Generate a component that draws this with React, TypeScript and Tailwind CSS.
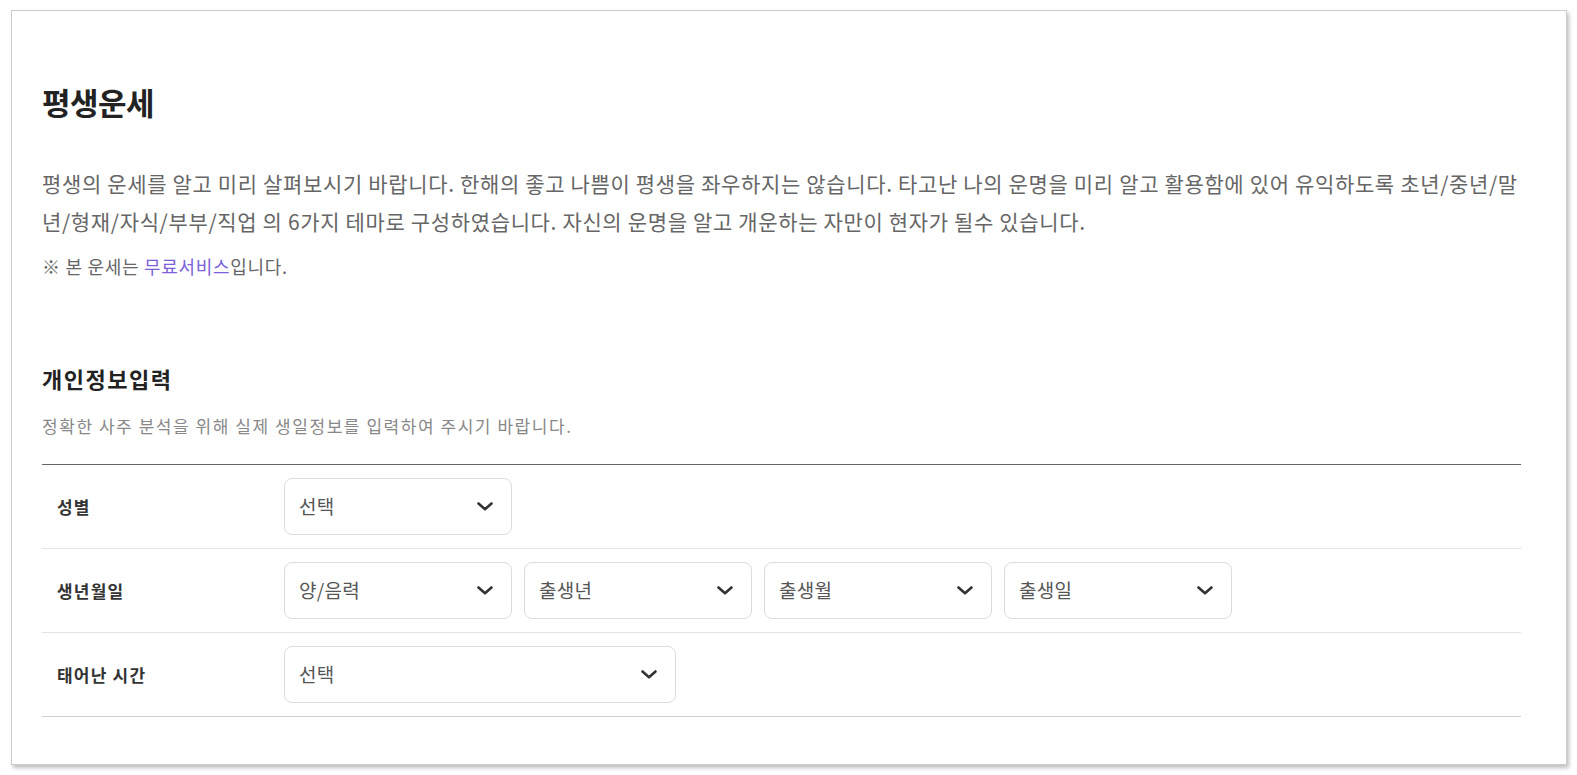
const font = { fontFamily: '"Noto Sans CJK KR", "Noto Sans", sans-serif' }

function Chevron() {
  return (
    <svg width="16" height="9" viewBox="0 0 16 9" fill="none" className="shrink-0">
      <polyline points="1.5,1.5 8,7.2 14.5,1.5" stroke="#333" strokeWidth="2.6" strokeLinecap="round" strokeLinejoin="round" />
    </svg>
  )
}

function Select({ label, width }: { label: string; width: string }) {
  return (
    <div className={`${width} flex h-[57px] items-center justify-between rounded-[8px] border border-[#dcdcdc] bg-white pl-[14px] pr-[18px]`}>
      <span className="text-[19px] tracking-[0.3px] text-[#555]">{label}</span>
      <Chevron />
    </div>
  )
}

function Row({ label, last, children }: { label: string; last?: boolean; children: React.ReactNode }) {
  return (
    <div className={`flex items-center py-[13px] border-b ${last ? 'border-[#cfcfcf]' : 'border-[#e4e4e4]'}`}>
      <div className="w-[242px] pl-[15px] text-[17px] font-bold tracking-[1.2px] text-[#333]">{label}</div>
      <div className="flex gap-[12px]">{children}</div>
    </div>
  )
}

export default function App() {
  return (
    <div className="min-h-screen bg-white pl-[11px] pt-[10px]" style={font}>
      <div className="h-[755px] w-[1556px] border border-[#cdcdcd] bg-white pl-[30px] pr-[45px] pt-[71px] shadow-[2px_3px_4px_rgba(0,0,0,0.25)]">
        <h1 className="text-[31px] font-bold leading-[40px] tracking-[-0.5px] text-[#222]">평생운세</h1>

        <div className="mt-[42px] text-[21px] leading-[38px] tracking-[0.65px] text-[#666] whitespace-nowrap">
          <p>평생의 운세를 알고 미리 살펴보시기 바랍니다. 한해의 좋고 나쁨이 평생을 좌우하지는 않습니다. 타고난 나의 운명을 미리 알고 활용함에 있어 유익하도록 초년/중년/말</p>
          <p>년/형재/자식/부부/직업 의 6가지 테마로 구성하였습니다. 자신의 운명을 알고 개운하는 자만이 현자가 될수 있습니다.</p>
        </div>
        <p className="mt-[13px] text-[18px] leading-[26px] tracking-[0.7px] text-[#666]">
          ※ 본 운세는 <span className="text-[#7b61d9]">무료서비스</span>입니다.
        </p>

        <h2 className="mt-[84px] text-[22px] font-bold leading-[30px] tracking-[1.5px] text-[#222]">개인정보입력</h2>
        <p className="mt-[21px] text-[17px] leading-[24px] tracking-[1.55px] text-[#888]">정확한 사주 분석을 위해 실제 생일정보를 입력하여 주시기 바랍니다.</p>

        <div className="mt-[26px] border-t border-[#666]">
          <Row label="성별">
            <Select label="선택" width="w-[228px]" />
          </Row>
          <Row label="생년월일">
            <Select label="양/음력" width="w-[228px]" />
            <Select label="출생년" width="w-[228px]" />
            <Select label="출생월" width="w-[228px]" />
            <Select label="출생일" width="w-[228px]" />
          </Row>
          <Row label="태어난 시간" last>
            <Select label="선택" width="w-[392px]" />
          </Row>
        </div>
      </div>
    </div>
  )
}
